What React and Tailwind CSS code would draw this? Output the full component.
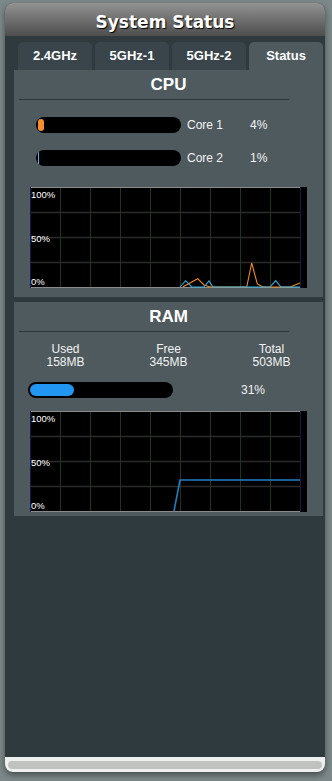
import React from "react";

const cpuCores = [
  { name: "Core 1", pct: 4, color: "bg-[#f7902b]" },
  { name: "Core 2", pct: 1, color: "bg-[#3bb4ea]" },
];

const cpuLines = [
  {
    color: "#f38a24",
    pts: [[152.7, 100], [167.7, 91.7], [174, 98], [180, 100], [216.7, 100], [221.7, 76], [227.3, 97], [233, 100], [260, 100], [270, 96]],
  },
  {
    color: "#36b3e6",
    pts: [[150, 100], [155.7, 93.7], [161.7, 100], [174, 100], [179, 94], [183, 100], [240, 100], [245.7, 93.7], [251, 100], [270, 100]],
  },
];

const ramLines = [
  { color: "#1f7fc6", width: 1.6, pts: [[144, 100], [150, 69], [270, 69]] },
];

function Chart({ lines }) {
  const vx = [30, 60, 90, 120, 150, 180, 210, 240];
  const hy = [25, 50, 75];
  return (
    <div className="ml-[16px] w-[277px] h-[101px] bg-black">
      <svg width="277" height="101" viewBox="0 0 277 101" className="block">
        {vx.map((x) => (
          <line key={x} x1={x + 0.5} y1="0" x2={x + 0.5} y2="101" stroke="#1c381a" strokeWidth="1" />
        ))}
        {hy.map((y) => (
          <line key={y} x1="0" y1={y + 0.5} x2="270" y2={y + 0.5} stroke="#2b2b2b" strokeWidth="1.3" />
        ))}
        <line x1="0" y1="0.5" x2="271" y2="0.5" stroke="#8a8a8a" strokeWidth="1" />
        <line x1="0" y1="100.5" x2="271" y2="100.5" stroke="#8a8a8a" strokeWidth="1" />
        <line x1="0.5" y1="0" x2="0.5" y2="101" stroke="#16164a" strokeWidth="1" />
        <line x1="270.5" y1="0" x2="270.5" y2="101" stroke="#16164a" strokeWidth="1" />
        <g fill="#ffffff" fontSize="9.5" fontFamily="'Liberation Sans', Arial, sans-serif">
          <text x="1" y="11">100%</text>
          <text x="1" y="55">50%</text>
          <text x="1" y="98">0%</text>
        </g>
        {lines.map((l, i) => (
          <polyline
            key={i}
            points={l.pts.map((p) => p.join(",")).join(" ")}
            fill="none"
            stroke={l.color}
            strokeWidth={l.width || 1.1}
          />
        ))}
      </svg>
    </div>
  );
}

function SectionTitle({ children }) {
  return (
    <>
      <div className="h-[28px] pt-px flex items-center justify-center text-[17px] font-bold text-white">
        {children}
      </div>
      <div className="mt-px ml-[5px] w-[270px] h-px bg-[#2e383c]" />
    </>
  );
}

export default function App() {
  const tabs = ["2.4GHz", "5GHz-1", "5GHz-2", "Status"];

  return (
    <div className="h-[781px] w-[332px] bg-[#7c8889] pt-[3px] pl-[5px] font-['Liberation_Sans',Arial,sans-serif] overflow-hidden">
      <div className="w-[320px] h-[769px] flex flex-col rounded-[8px] overflow-hidden bg-[#2f3a3f] shadow-[0_3px_6px_rgba(0,0,0,0.45)]">
        {/* header */}
        <div className="h-[33px] pt-[6px] flex items-center justify-center bg-linear-to-b from-[#939393] to-[#4e4e4e]">
          <span className="font-['DejaVu_Sans',Verdana,sans-serif] text-[17px] font-bold text-white [text-shadow:1px_1px_1px_#000]">
            System Status
          </span>
        </div>

        {/* body */}
        <div className="flex-1 pt-[6px]">
          <div className="flex gap-[3px] pl-[13px] pr-[2px]">
            {tabs.map((t) => (
              <div
                key={t}
                className={`w-[74px] h-[28px] flex items-center justify-center rounded-t-[5px] text-[13px] font-bold text-white ${
                  t === "Status" ? "bg-[#4f5a5e]" : "bg-[#39454a]"
                }`}
              >
                {t}
              </div>
            ))}
          </div>

          {/* CPU */}
          <div className="ml-[9px] w-[309px] bg-[#4f5a5e] pb-[9px]">
            <SectionTitle>CPU</SectionTitle>
            <div className="mt-[17px] flex flex-col gap-[17px]">
              {cpuCores.map((c) => (
                <div key={c.name} className="flex items-center h-[16px] pl-[22px] text-[12px] text-[#f2f2f2]">
                  <div className="w-[145px] h-[16px] rounded-full bg-black p-[2px]">
                    <div
                      className={`h-full rounded-full ${c.color}`}
                      style={{ width: `${Math.max(1, (141 * c.pct) / 100)}px` }}
                    />
                  </div>
                  <span className="ml-[6px] w-[63px]">{c.name}</span>
                  <span>{c.pct}%</span>
                </div>
              ))}
            </div>
            <div className="mt-[21px]">
              <Chart lines={cpuLines} />
            </div>
          </div>

          {/* RAM */}
          <div className="mt-[5px] ml-[9px] w-[309px] bg-[#4f5a5e] pb-[4px]">
            <SectionTitle>RAM</SectionTitle>
            <div className="mt-[11px] grid grid-cols-3 text-center text-[12px] leading-[13px] text-[#f2f2f2]">
              <div>
                <div>Used</div>
                <div>158MB</div>
              </div>
              <div>
                <div>Free</div>
                <div>345MB</div>
              </div>
              <div>
                <div>Total</div>
                <div>503MB</div>
              </div>
            </div>
            <div className="mt-[12px] flex items-center pl-[14px] text-[12px] text-[#f2f2f2]">
              <div className="w-[145px] h-[16px] rounded-full bg-black p-[2px]">
                <div className="h-full rounded-full bg-[#2196f3]" style={{ width: `${(141 * 31) / 100}px` }} />
              </div>
              <span className="ml-[68px]">31%</span>
            </div>
            <div className="mt-[12px]">
              <Chart lines={ramLines} />
            </div>
          </div>
        </div>

        {/* footer */}
        <div className="h-[15px] bg-[#eef0ef] px-[3px] pt-[4px]">
          <div className="h-[8px] rounded-full bg-[#c0c2bf]" />
        </div>
      </div>
    </div>
  );
}
